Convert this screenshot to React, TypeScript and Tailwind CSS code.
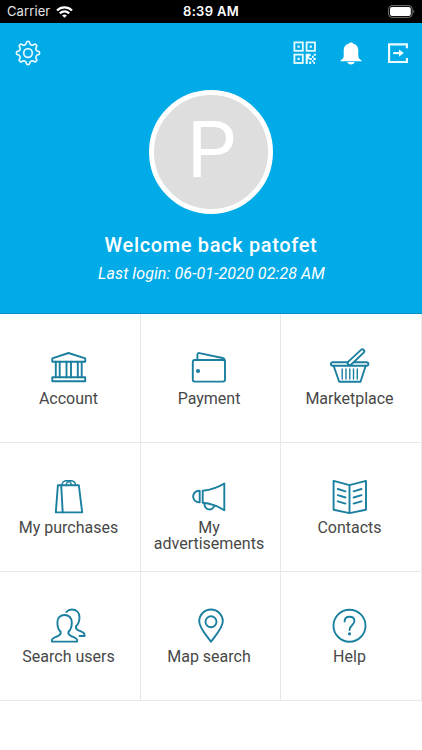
import React, { FC, ReactNode } from "react";

// Outline of the settings cog, eight rounded teeth
const cogPath = () => {
  const at = (r: number, deg: number) => {
    const a = (deg * Math.PI) / 180;
    return `${(13 + r * Math.cos(a)).toFixed(2)} ${(13 + r * Math.sin(a)).toFixed(2)}`;
  };
  let d = `M${at(8.7, -22.5)}`;
  for (let i = 0; i < 8; i++) {
    const c = i * 45;
    d += `C${at(8.7, c - 14)} ${at(9.4, c - 11)} ${at(10.6, c - 9)}`;
    d += `C${at(12.1, c - 7)} ${at(12.1, c + 7)} ${at(10.6, c + 9)}`;
    d += `C${at(9.4, c + 11)} ${at(8.7, c + 14)} ${at(8.7, c + 22.5)}`;
  }
  return d + "Z";
};

const StatusBar: FC = () => (
  <div className="grid h-[23px] grid-cols-3 items-center bg-black px-[7px] font-['Inter',sans-serif] text-[13px] leading-[23px] text-white">
    <div className="flex items-center gap-[6px]">
      <span className="tracking-[0.1px] text-[#e4e4e4]">Carrier</span>
      <svg width="17" height="12" viewBox="0 0 17 12" fill="none" stroke="#fff" strokeWidth="2.3">
        <path d="M1 4.5C5.2.4 11.8.4 16 4.5" />
        <path d="M3.8 7.3c2.7-2.6 6.7-2.6 9.4 0" />
        <path d="M8.5 11.8 6.1 9.4c1.4-1.2 3.4-1.2 4.8 0Z" fill="#fff" stroke="none" />
      </svg>
    </div>
    <span className="text-center font-semibold tracking-[0.3px]">8:39 AM</span>
    <svg className="-mt-px justify-self-end" width="27" height="13" viewBox="0 0 27 13" fill="none">
      <rect x="0.6" y="0.6" width="23.6" height="11.8" rx="3.4" stroke="#777" />
      <rect x="2" y="2" width="20.8" height="9" rx="2" fill="#fff" />
      <path d="M25.4 4.6c1.3.6 1.3 3.2 0 3.8Z" fill="#777" />
    </svg>
  </div>
);

const Toolbar: FC = () => (
  <div className="flex items-center justify-between pt-[17px] pr-[12px] pl-[15px]">
    <button aria-label="Settings">
      <svg width="26" height="26" viewBox="0 0 26 26" fill="none" stroke="#e9fbff" strokeWidth="1.7">
        <path d={cogPath()} />
        <circle cx="13" cy="13" r="4.3" />
      </svg>
    </button>
    <div className="flex items-center gap-[23px]">
      <button aria-label="QR code" className="-mr-px">
        <svg width="24" height="24" viewBox="0 0 24 24" fill="none" stroke="#e9fbff" strokeWidth="1.8">
          <rect x="1.4" y="1.4" width="8.4" height="8.4" />
          <rect x="13.6" y="1.4" width="8.4" height="8.4" />
          <rect x="1.4" y="13.6" width="8.4" height="8.4" />
          <path
            d="M4.5 4.5h2.2v2.2H4.5zM16.7 4.5h2.2v2.2h-2.2zM4.5 16.7h2.2v2.2H4.5zM12.7 12.7h5v2.2h-1.4v2h2.6v2h-2.6v-.9h-1.5v4.9h-2.1zM20.8 12.7h2.1v2.1h-2.1zM18.9 14.8h1.9v2.1h-1.9zM20.4 17h2.5v2.1h-2.5zM16.2 20.4h2v2.5h-2zM18.9 19.2h1.9v1.9h-1.9zM20.4 21.1h1.6v1.8h-1.6z"
            fill="#e9fbff"
            stroke="none"
          />
        </svg>
      </button>
      <button aria-label="Notifications">
        <svg width="24" height="24" viewBox="0 0 24 24" fill="#fff">
          <path d="M12 1.6c-1 0-1.7.4-2 1C6.400 3.400 4.700 6.300 4.700 9.600v4.900c0 1.500-.3 2.400-1.300 3.400l-2 1.500v.9h21.200v-.9l-2-1.500c-1-1-1.300-1.900-1.300-3.400V9.600c0-3.300-1.700-6.200-5.300-7C13.700 2 13 1.600 12 1.600Z" />
          <path d="M8.300 21.100h7.400c-.4 1.500-1.800 2.400-3.700 2.400s-3.300-.9-3.700-2.400Z" />
        </svg>
      </button>
      <button aria-label="Log out">
        <svg width="24" height="24" viewBox="0 0 24 24" fill="none" stroke="#e9fbff" strokeWidth="2.2">
          <path d="M20.900 7.300V3.300H3.100V21H20.900V17" />
          <path d="M7.200 12.100h8" />
          <path d="m13 8.400 4.800 3.700-4.800 3.700Z" fill="#e9fbff" stroke="none" />
        </svg>
      </button>
    </div>
  </div>
);

const tiles: { label: string; icon: ReactNode }[] = [
  {
    label: "Account",
    icon: (
      <>
        <path d="M3.300 15.700V12.300L19.500 7l16.700 5.300v3.400ZM3.300 31.300h32.900v4H3.300Z" />
        <path d="M6.800 15.700v15.600M10.700 15.700v15.600M17.500 15.700v15.600M22 15.700v15.600M28.800 15.700v15.600M32.700 15.700v15.600" />
      </>
    ),
  },
  {
    label: "Payment",
    icon: (
      <>
        <rect x="3.800" y="14" width="32.200" height="21.600" rx="2" />
        <path d="M8.400 14V8.800c0-1.300.8-1.900 2-1.700l23.200 4.900c1.500.4 2.100 1.200 2.100 2.800" />
        <circle cx="9" cy="25" r="2.100" fill="#1b7f9f" stroke="none" />
      </>
    ),
  },
  {
    label: "Marketplace",
    icon: (
      <>
        <path d="M18 16.300H2.600a1.700 1.700 0 0 0 0 3.500h34a1.700 1.700 0 0 0 0-3.500H24.500" />
        <path d="m3.600 19.800 5.600 15.900h21.300l5.200-15.900" />
        <path d="M12.200 23v10M16 23v10M19.800 23v10M23.500 23v10M27.300 23v10" strokeWidth="1.400" />
        <path d="M18.300 15.600 31 3.900a1.900 1.900 0 0 1 2.700 2.700L21.300 18.500a2 2 0 0 1-3-2.900Z" />
      </>
    ),
  },
  {
    label: "My purchases",
    icon: (
      <>
        <path d="M8.900 10.200h20.900l3.400 27.200H6.800Z" />
        <path d="m12.200 10.200 1.500 27.200" />
        <path d="M13 10.200c0-6 9.300-6 9.300 0M17.300 10.200c0-6 9.200-6 9.200 0M16.500 5.700h6.300" strokeWidth="1.500" />
      </>
    ),
  },
  {
    label: "My advertisements",
    icon: (
      <>
        <path d="M13.700 15.700c8.300-.8 15.300-3.200 21.600-7.200v26.700c-6.300-4-13.300-6.700-21.600-7.400Z" />
        <path d="M10.700 15.800v11.600C2 27.800 2 15.400 10.700 15.800Z" />
        <path d="M15.300 28.300c.4 7.800 8.300 7.600 10 2.500" />
      </>
    ),
  },
  {
    label: "Contacts",
    icon: (
      <>
        <path d="m3.600 5.900 15.900 4.200 16.500-4.200v28.800l-16.500 3.400-15.900-3.400ZM19.500 10.100v28" />
        <path d="m7.800 14 7.700 2.300M7.800 20.200l7.700 2.300M7.800 26.300l7.700 2.300M31.500 14l-7.900 2.300M31.500 20.200l-7.900 2.300M31.500 26.300l-7.900 2.300" />
      </>
    ),
  },
  {
    label: "Search users",
    icon: (
      <>
        <path d="M15.600 11c-4.300 0-7.200 2.800-7.200 7.500 0 4 1.100 7.400 3.200 9.300.7 2.300-.4 3.200-2.600 4.200-3.600 1.500-6.100 2.200-6.100 4.100v1.500h25.200v-1.500c0-1.900-2.500-2.600-6.100-4.100-2.200-1-3.200-1.900-2.500-4.200 2.200-1.900 3.300-5.300 3.300-9.300 0-4.700-2.900-7.500-7.200-7.500Z" />
        <path d="M17.300 8c1.400-1.700 3.200-2.500 5.600-2.500 4.500 0 7.600 3 7.600 7.700 0 4-1.400 7.100-3.500 9-.6 2.200.4 3.200 2.500 4.200 3.500 1.500 6 2 6 4v1.600h-5" />
      </>
    ),
  },
  {
    label: "Map search",
    icon: (
      <>
        <path d="M22 37.800C18 32 10.200 24 10.200 17.300a11.800 11.800 0 0 1 23.600 0C33.800 24 26 32 22 37.800Z" />
        <circle cx="22" cy="17.700" r="5.500" />
      </>
    ),
  },
  {
    label: "Help",
    icon: (
      <>
        <circle cx="19.500" cy="21.700" r="16" />
        <path d="M14.600 17.500c0-3 2-4.700 4.900-4.700s4.900 1.700 4.900 4.300c0 4.100-4.900 4.300-4.900 8.900" />
        <circle cx="19.500" cy="29.800" r="1.600" fill="#1b7f9f" stroke="none" />
      </>
    ),
  },
];

const App: FC = () => {
  return (
    <div className="flex h-[750px] w-[422px] flex-col overflow-hidden bg-white font-['Roboto',sans-serif]">
      <StatusBar />

      {/* Profile header */}
      <header className="h-[291px] border-b border-[#088fc4] bg-[#00abe8] text-white">
        <Toolbar />
        <div className="flex flex-col items-center pt-[24px]">
          <div className="flex h-[124px] w-[124px] items-center justify-center rounded-full border-[5px] border-white bg-[#dedede]">
            <span className="pb-[2px] pl-px text-[78px] leading-none">P</span>
          </div>
          <h1 className="mt-[19px] text-[20px] leading-6 font-medium tracking-[0.65px]">Welcome back patofet</h1>
          <p className="mt-[7px] pl-px text-[16px] leading-5 tracking-[0.1px] italic">Last login: 06-01-2020 02:28 AM</p>
        </div>
      </header>

      {/* Menu tiles */}
      <main className="grid grid-cols-[141px_140px_141px] auto-rows-[129px]">
        {tiles.map((tile) => (
          <button
            key={tile.label}
            className="flex flex-col items-center justify-start border-r border-b border-[#e8e8e8] pt-8 pr-[3px]"
          >
            <svg
              width="40"
              height="40"
              viewBox="0 0 40 40"
              fill="none"
              stroke="#1b7f9f"
              strokeWidth="1.900"
              strokeLinejoin="round"
              strokeLinecap="round"
            >
              {tile.icon}
            </svg>
            <span className="mt-[5px] w-[120px] text-center text-[16px] leading-4 text-[#484848]">
              {tile.label}
            </span>
          </button>
        ))}
      </main>
    </div>
  );
};

export default App;
